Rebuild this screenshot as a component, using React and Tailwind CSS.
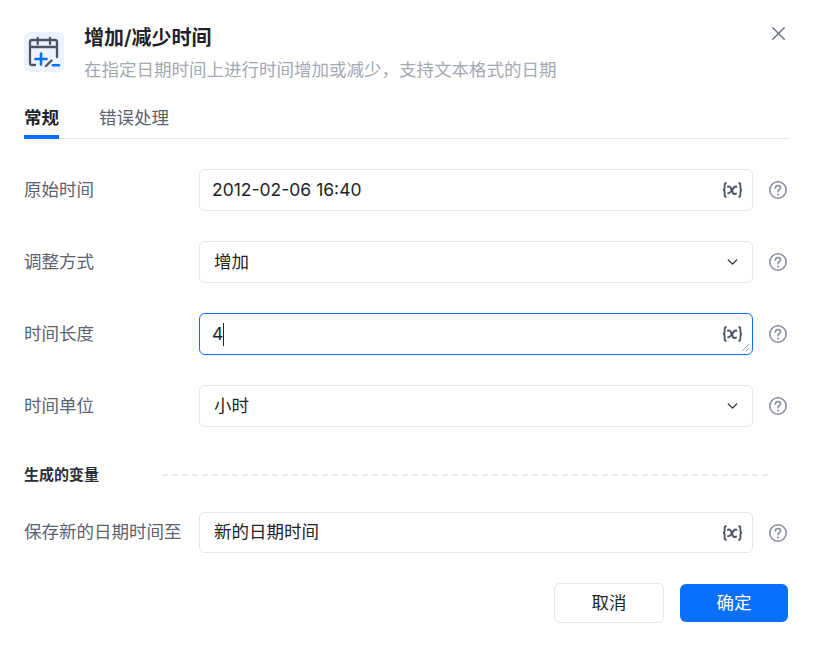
import { X, ChevronDown } from "lucide-react";

const FONT = "font-['Inter','Noto_Sans_CJK_SC',sans-serif]";

const VarIcon = () => (
  <svg width="21" height="17" viewBox="0 0 21 17" fill="none" className="absolute right-[9px] top-1/2 -translate-y-1/2">
    <path d="M4.500 1.500C2.800 1.500 2.600 2.500 2.600 4v2.500c0 1-.6 2-1.600 2 1 0 1.600 1 1.600 2V13c0 1.500.2 2.500 1.900 2.500" stroke="#4b5563" strokeWidth="1.800" />
    <path d="M16.500 1.500c1.700 0 1.900 1 1.900 2.500v2.500c0 1 .6 2 1.600 2-1 0-1.600 1-1.600 2V13c0 1.500-.2 2.500-1.900 2.500" stroke="#4b5563" strokeWidth="1.800" />
    <path d="M6 5.200c1.800-.7 2.500.2 3.200 2l1.400 3.400c.7 1.800 1.500 2.400 3.400 1.500" stroke="#4b5563" strokeWidth="2" strokeLinecap="round" />
    <path d="M14.500 5.200c-1.500-.4-2.500.5-3.500 1.900l-1.800 2.600c-.8 1.200-1.500 2-3 2" stroke="#4b5563" strokeWidth="2" strokeLinecap="round" />
  </svg>
);

const HelpIcon = () => (
  <svg width="20" height="20" viewBox="0 0 20 20" fill="none" className="shrink-0">
    <circle cx="10" cy="10" r="8.2" stroke="#878d99" strokeWidth="1.6" />
    <path d="M7.400 8c0-1.500 1.100-2.500 2.600-2.500s2.600 1 2.600 2.300c0 1.900-2.600 2-2.600 3.900" stroke="#878d99" strokeWidth="1.6" strokeLinecap="round" />
    <circle cx="10" cy="14.400" r="1" fill="#878d99" />
  </svg>
);

const CalendarIcon = () => (
  <svg width="40" height="40" viewBox="0 0 40 40" fill="none" className="rounded-md bg-[#edf3fc]">
    <path d="M11 33H8a2 2 0 0 1-2-2V10a2 2 0 0 1 2-2h23a2 2 0 0 1 2 2v15" stroke="#4b5563" strokeWidth="2.300" strokeLinecap="round" />
    <path d="M6 15h27M13.700 6v6M26 6v6" stroke="#4b5563" strokeWidth="2.300" strokeLinecap="round" />
    <path d="M17 21.500v11M11.500 27h11" stroke="#0b6ffd" strokeWidth="2.600" strokeLinecap="round" />
    <path d="M22 34l5.500-5.500" stroke="#4b5563" strokeWidth="2.300" strokeLinecap="round" />
    <path d="M29 33.300h6" stroke="#0b6ffd" strokeWidth="2.600" strokeLinecap="round" />
  </svg>
);

const Row = ({ label, children, className = "" }) => (
  <div className={`flex items-center ${className}`}>
    <div className="w-[175px] shrink-0 text-[17.5px] text-[#5b6270]">{label}</div>
    {children}
    <div className="w-[37px] flex justify-end pr-[2px]">
      <HelpIcon />
    </div>
  </div>
);

const Field = ({ value, focused, h = "h-[42px]", pl = "pl-[12px]", caret }) => (
  <div
    className={`relative ${h} w-[554px] flex items-center ${pl} rounded-md border text-[17.5px] text-[#1f2329] ${
      focused ? "border-[#0b6ffd]" : "border-[#e3e5ea]"
    }`}
  >
    <span>{value}</span>
    {caret && <span className="w-px h-[23px] bg-[#1f2329]" />}
    <VarIcon />
    {focused && (
      <svg width="9" height="9" viewBox="0 0 9 9" className="absolute right-[2px] bottom-[2px]">
        <path d="M1 8l7-7M5 8l3-3" stroke="#9ca3af" strokeWidth="1" />
      </svg>
    )}
  </div>
);

const SelectField = ({ value }) => (
  <div className="relative h-[42px] w-[554px] flex items-center pl-[14px] rounded-md border border-[#e3e5ea] text-[17.5px] text-[#1f2329]">
    <span>{value}</span>
    <ChevronDown size={17} strokeWidth={1.9} className="absolute right-[11px] top-1/2 -translate-y-1/2 text-[#2b2f36]" />
  </div>
);

export default function App() {
  return (
    <div className={`w-[813px] h-[647px] bg-white pl-6 pr-[23px] pt-[22px] ${FONT} relative overflow-hidden`}>
      <button className="absolute right-[23px] top-[22px] text-[#5f6779]">
        <X size={23} strokeWidth={1.35} />
      </button>

      <div className="flex gap-5">
        <div className="pt-[10px]">
          <CalendarIcon />
        </div>
        <div className="pt-px">
          <h1 className="text-[20px] leading-[30px] font-semibold text-[#1f2329]">增加/减少时间</h1>
          <p className="mt-[4px] text-[17.5px] leading-[26px] text-[#a3a8b3]">
            在指定日期时间上进行时间增加或减少，支持文本格式的日期
          </p>
        </div>
      </div>

      <div className="mt-[22px] flex gap-10 border-b border-[#e3e5ea] h-[34px]">
        <div className="h-[34px] border-b-[4px] border-[#0b6ffd] text-[17.5px] leading-[26px] font-semibold text-[#1f2329]">
          常规
        </div>
        <div className="text-[17.5px] leading-[26px] text-[#5b6270]">错误处理</div>
      </div>

      <Row label="原始时间" className="mt-[30px]">
        <Field value="2012-02-06 16:40" />
      </Row>
      <Row label="调整方式" className="mt-[30px]">
        <SelectField value="增加" />
      </Row>
      <Row label="时间长度" className="mt-[30px]">
        <Field value="4" focused caret />
      </Row>
      <Row label="时间单位" className="mt-[30px]">
        <SelectField value="小时" />
      </Row>

      <div className="mt-[37px] flex items-center">
        <span className="text-[15px] leading-[22px] font-semibold text-[#2b2f36]">生成的变量</span>
        <div className="ml-[63px] w-[606px] border-t-2 border-dashed border-[#e8eaee]" />
      </div>

      <Row label="保存新的日期时间至" className="mt-[26px]">
        <Field value="新的日期时间" h="h-[41px]" pl="pl-[14px]" />
      </Row>

      <div className="mt-[30px] flex justify-end gap-4 pr-[2px]">
        <button className="w-[110px] h-10 rounded-md border border-[#e3e5ea] bg-white text-[17.5px] text-[#1f2329]">取消</button>
        <button className="w-[108px] h-[38px] mt-px rounded-md bg-[#0b6ffd] text-[17.5px] text-white">确定</button>
      </div>
    </div>
  );
}
